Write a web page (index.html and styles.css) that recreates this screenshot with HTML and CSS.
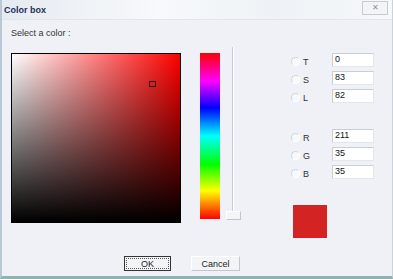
FILE: index.html
```html
<!DOCTYPE html>
<html lang="en">
<head>
    <meta charset="UTF-8">
    <title>Color box</title>
    <link rel="stylesheet" href="styles.css">
</head>
<body>
    <div class="window">
        <div class="titlebar">
            <span class="title">Color box</span>
            <span class="close">&#x2715;</span>
        </div>
        <div class="content">
            <div class="prompt">Select a color :</div>
            <div class="main">
                <div class="square"><span class="marker"></span></div>
                <div class="hue"></div>
                <div class="slider"><span class="track"></span><span class="thumb"></span></div>
                <div class="fields">
                    <div class="group">
                        <div class="row"><span class="radio"></span><span class="lbl">T</span><span class="box">0</span></div>
                        <div class="row"><span class="radio"></span><span class="lbl">S</span><span class="box">83</span></div>
                        <div class="row"><span class="radio"></span><span class="lbl">L</span><span class="box">82</span></div>
                    </div>
                    <div class="group rgb">
                        <div class="row"><span class="radio"></span><span class="lbl">R</span><span class="box">211</span></div>
                        <div class="row"><span class="radio"></span><span class="lbl">G</span><span class="box">35</span></div>
                        <div class="row"><span class="radio"></span><span class="lbl">B</span><span class="box">35</span></div>
                    </div>
                    <div class="swatch"></div>
                </div>
            </div>
            <div class="buttons">
                <button class="btn ok"><span>OK</span></button>
                <button class="btn">Cancel</button>
            </div>
        </div>
    </div>
</body>
</html>
```

FILE: styles.css
```css
body        { margin:0; font-family:"Liberation Sans", Arial, sans-serif; font-size:9px; color:#222; background:#eef0f5; }
.window     { width:393px; height:279px; box-sizing:border-box; background:#eff1f6; border-left:2px solid #b7c9d6; border-right:1px solid #c9d3dc; border-bottom:3px solid #8fb3b3; position:relative; overflow:hidden; }

.titlebar   { height:19px; display:flex; align-items:center; justify-content:space-between; padding:0 4px 0 2px;
              background:linear-gradient(to right, #e6ebf1, #f7f9fb 40%, #eef2f6 70%, #f6f8fa); border-bottom:1px solid #e2e6ec; }
.title      { font-weight:bold; color:#1d2f5c; font-size:9px; }
.close      { width:24px; height:12px; border:1px solid #c4cbd3; background:#f2f4f6; color:#8a9099; font-size:8px; text-align:center; line-height:12px; margin-top:-4px; }

.content    { padding:0 0 0 9px; }
.prompt     { margin-top:8px; height:12px; color:#333; }
.main       { display:flex; margin-top:13px; height:193px; }

.square     { width:168px; height:168px; border:1px solid #000; position:relative;
              background:linear-gradient(to top, #000, rgba(0,0,0,0)), linear-gradient(to right, #fff, #f00); }
.marker     { position:absolute; left:137px; top:27px; width:5px; height:4px; border:1px solid #222; }

.hue        { width:20px; height:166px; margin-left:19px;
              background:linear-gradient(to bottom, #f00 0%, #f0f 17%, #00f 33%, #0ff 50%, #0f0 67%, #ff0 83%, #f00 100%); }

.slider     { width:14px; margin-left:6px; position:relative; }
.track      { position:absolute; left:6px; top:-6px; width:1px; height:166px; background:#c6ccd3; border-right:1px solid #fff; }
.thumb      { position:absolute; left:0; top:158px; width:13px; height:7px; background:#f4f5f7; border:1px solid #c0c6cd; border-top-color:#fff; border-left-color:#fff; }

.fields     { margin-left:51px; display:flex; flex-direction:column; }
.group      { display:flex; flex-direction:column; gap:4px; }
.group.rgb  { margin-top:26px; gap:4px; }
.row        { display:flex; align-items:center; height:14px; }
.radio      { width:7px; height:7px; border-radius:50%; border:1px solid #d3d7dc; border-right-color:#fff; border-bottom-color:#fff; background:#f7f8fa; margin-top:3px; }
.lbl        { width:29px; margin-left:3px; margin-top:3px; color:#333; }
.box        { height:14px; background:#fff; border:1px solid #e3e6ea; border-top-color:#c9ced4; border-left-color:#c9ced4; padding-left:2px; line-height:11px; color:#111; box-sizing:border-box; width:42px; }
.swatch     { width:34px; height:33px; background:#d32323; margin-top:26px; margin-left:2px; }

.buttons    { display:flex; margin-left:113px; gap:20px; margin-top:10px; }
.btn        { font-family:inherit; font-size:9px; height:15px; padding:0; background:#f3f4f6; border:1px solid #c2c7cd; border-top-color:#fff; border-left-color:#fff; color:#222; width:49px; }
.btn.ok     { width:47px; border:1px solid #333; display:flex; align-items:center; justify-content:center; padding:1px; }
.btn.ok span{ display:block; width:100%; height:100%; border:1px dotted #555; box-sizing:border-box; line-height:11px; }
```
